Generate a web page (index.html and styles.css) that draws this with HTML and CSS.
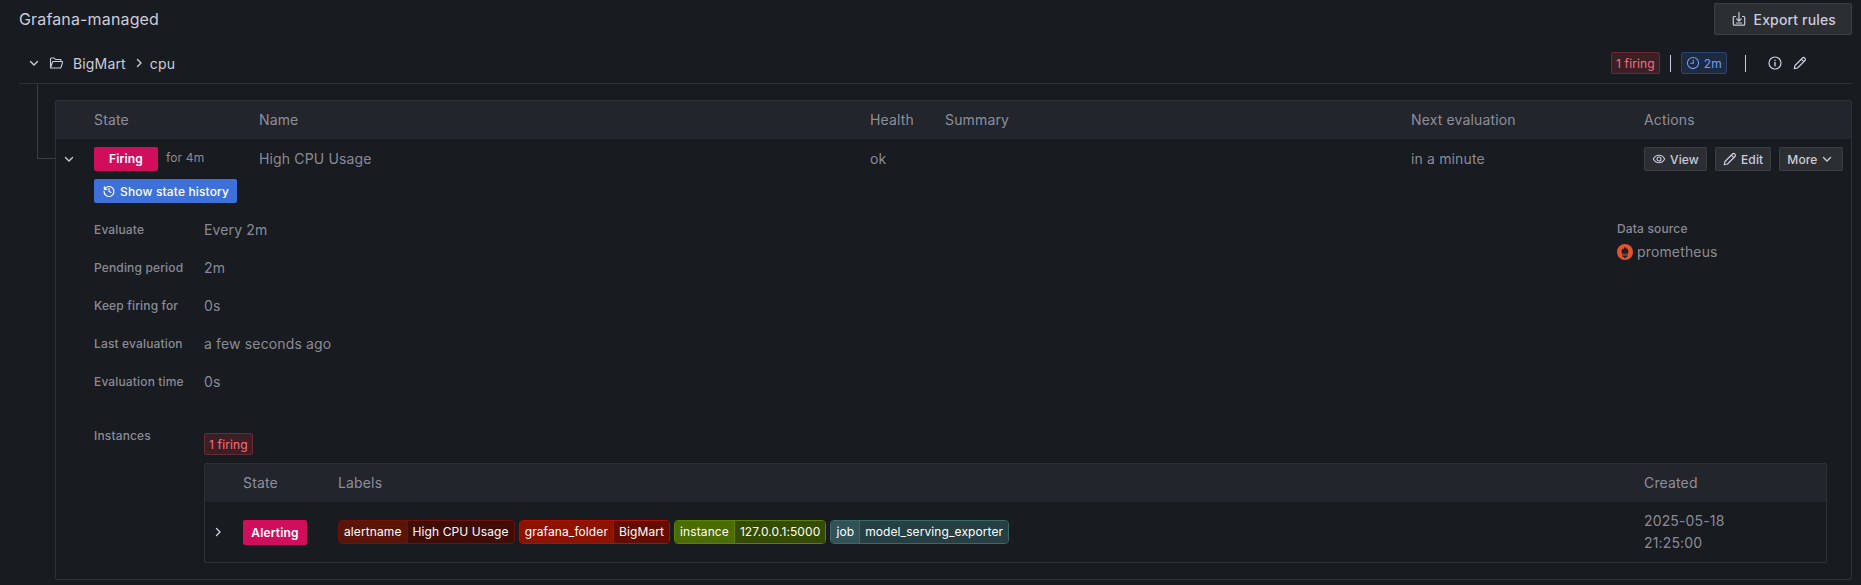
FILE: index.html
```html
<!DOCTYPE html>
<html lang="en">
<head>
    <meta charset="UTF-8">
    <meta name="viewport" content="width=device-width, initial-scale=1.0">
    <title>Alert rules</title>
    <link rel="stylesheet" href="styles.css">
</head>
<body>
    <svg class="defs" width="0" height="0">
        <symbol id="i-down" viewBox="0 0 16 16"><path d="M4.5 6.5 8 10l3.5-3.5" fill="none" stroke="currentColor" stroke-width="1.4" stroke-linecap="round" stroke-linejoin="round"/></symbol>
        <symbol id="i-right" viewBox="0 0 16 16"><path d="M6.5 4.5 10 8l-3.5 3.5" fill="none" stroke="currentColor" stroke-width="1.4" stroke-linecap="round" stroke-linejoin="round"/></symbol>
        <symbol id="i-folder" viewBox="0 0 16 16"><path d="M2.5 13V3.8c0-.4.3-.8.8-.8h2.900l1.300 1.500h4.700c.4 0 .8.400.8.8V6.500M2.500 13h9.700c.3 0 .6-.2.700-.5l1.700-5.100c.2-.5-.2-.9-.6-.9H5.200c-.3 0-.6.200-.7.500L2.500 13Z" fill="none" stroke="currentColor" stroke-width="1.1" stroke-linejoin="round"/></symbol>
        <symbol id="i-import" viewBox="0 0 16 16"><path d="M4.5 5.500H3.300c-.6 0-1 .4-1 1v6.700c0 .6.400 1 1 1h9.400c.6 0 1-.4 1-1V6.500c0-.6-.4-1-1-1h-1.200M8 1.500V10M5.700 7.800 8 10.100l2.300-2.300M5.500 12h5" fill="none" stroke="currentColor" stroke-width="1.2" stroke-linecap="round" stroke-linejoin="round"/></symbol>
        <symbol id="i-clock" viewBox="0 0 16 16"><circle cx="8" cy="8" r="6.4" fill="none" stroke="currentColor" stroke-width="1.2"/><path d="M8.300 4.500v3.800H5.400" fill="none" stroke="currentColor" stroke-width="1.2" stroke-linecap="round" stroke-linejoin="round"/></symbol>
        <symbol id="i-info" viewBox="0 0 16 16"><circle cx="8" cy="8" r="6" fill="none" stroke="currentColor" stroke-width="1.2"/><path d="M8 7.500v3.200M8 5.200v.2" fill="none" stroke="currentColor" stroke-width="1.4" stroke-linecap="round"/></symbol>
        <symbol id="i-pen" viewBox="0 0 16 16"><path d="M2.300 13.700 3 10.500l7.500-7.500c.6-.6 1.500-.6 2.100 0l.4.400c.6.600.6 1.500 0 2.100l-7.500 7.500-3.200.7ZM9.300 4.200l2.500 2.500" fill="none" stroke="currentColor" stroke-width="1.2" stroke-linejoin="round"/></symbol>
        <symbol id="i-eye" viewBox="0 0 16 16"><path d="M1.500 8C3 5.200 5.300 3.800 8 3.800s5 1.400 6.500 4.200C13 10.800 10.700 12.200 8 12.200S3 10.800 1.500 8Z" fill="none" stroke="currentColor" stroke-width="1.2" stroke-linejoin="round"/><circle cx="8" cy="8" r="2.3" fill="none" stroke="currentColor" stroke-width="1.2"/></symbol>
        <symbol id="i-history" viewBox="0 0 16 16"><path d="M2.700 3.200v2.900h2.900M2.900 6A5.700 5.700 0 1 1 2.300 8.300M8 5v3.300l2.200 1.300" fill="none" stroke="currentColor" stroke-width="1.3" stroke-linecap="round" stroke-linejoin="round"/></symbol>
    </svg>

    <div class="page-head">
        <h1>Grafana-managed</h1>
        <button class="btn btn-large"><svg class="icon"><use href="#i-import"/></svg>Export rules</button>
    </div>

    <div class="group-head">
        <svg class="icon group-toggle"><use href="#i-down"/></svg>
        <svg class="icon group-folder"><use href="#i-folder"/></svg>
        <span class="crumb">BigMart</span>
        <svg class="icon crumb-sep"><use href="#i-right"/></svg>
        <span class="crumb">cpu</span>
        <div class="group-meta">
            <span class="badge badge-red">1 firing</span>
            <span class="pipe"></span>
            <span class="badge badge-blue"><svg class="icon icon-small"><use href="#i-clock"/></svg>2m</span>
            <span class="pipe pipe-wide"></span>
            <svg class="icon meta-icon"><use href="#i-info"/></svg>
            <svg class="icon meta-icon"><use href="#i-pen"/></svg>
        </div>
    </div>

    <div class="group-body">
        <div class="tree-line"></div>
        <div class="rules">
            <div class="rule-cols rule-head">
                <span></span>
                <span>State</span>
                <span>Name</span>
                <span>Health</span>
                <span>Summary</span>
                <span>Next evaluation</span>
                <span>Actions</span>
            </div>
            <div class="rule-cols rule-row">
                <svg class="icon row-toggle"><use href="#i-down"/></svg>
                <div class="state-cell">
                    <div class="state-line">
                        <span class="pill">Firing</span>
                        <span class="for-time">for 4m</span>
                    </div>
                    <button class="btn-history"><svg class="icon icon-small"><use href="#i-history"/></svg>Show state history</button>
                </div>
                <span>High CPU Usage</span>
                <span>ok</span>
                <span></span>
                <span>in a minute</span>
                <div class="actions">
                    <button class="btn"><svg class="icon icon-small"><use href="#i-eye"/></svg>View</button>
                    <button class="btn"><svg class="icon icon-small icon-pen"><use href="#i-pen"/></svg>Edit</button>
                    <button class="btn">More<svg class="icon icon-after"><use href="#i-down"/></svg></button>
                </div>
            </div>

            <div class="details">
                <dl class="facts">
                    <div class="fact"><dt>Evaluate</dt><dd>Every 2m</dd></div>
                    <div class="fact"><dt>Pending period</dt><dd>2m</dd></div>
                    <div class="fact"><dt>Keep firing for</dt><dd>0s</dd></div>
                    <div class="fact"><dt>Last evaluation</dt><dd>a few seconds ago</dd></div>
                    <div class="fact"><dt>Evaluation time</dt><dd>0s</dd></div>
                </dl>
                <div class="source">
                    <div class="source-title">Data source</div>
                    <div class="source-name">
                        <svg class="prom" viewBox="0 0 16 16">
                            <circle cx="8" cy="8" r="8" fill="#e6522c"/>
                            <path d="M8 2.200c.3 1.400 1.100 1.800 1.500 2.700.2-.4.300-.6.300-1 1 1.100 1.700 2.600 1.500 4.300l-.5 1.600H5.200l-.6-1.600c-.2-1.500.4-2.700 1.200-3.600 0 .4.100.7.300 1C6.500 5 7.700 3.700 8 2.200Z" fill="#1f1f22"/>
                            <path d="M5.200 10.400h5.600v1.100H5.200zM5.600 12h4.800v.9H5.600zM6.900 13.300h2.200c0 .7-.5 1.100-1.100 1.100s-1.100-.4-1.100-1.100Z" fill="#1f1f22"/>
                        </svg>
                        prometheus
                    </div>
                </div>
            </div>

            <div class="instances">
                <div class="instances-title">Instances</div>
                <div class="instances-main">
                    <span class="badge badge-red">1 firing</span>
                    <div class="inst-table">
                        <div class="inst-cols inst-head">
                            <span></span>
                            <span>State</span>
                            <span>Labels</span>
                            <span>Created</span>
                        </div>
                        <div class="inst-cols inst-row">
                            <svg class="icon row-toggle"><use href="#i-right"/></svg>
                            <span class="pill">Alerting</span>
                            <div class="labels">
                                <span class="label label-1"><b>alertname</b><i>High CPU Usage</i></span>
                                <span class="label label-2"><b>grafana_folder</b><i>BigMart</i></span>
                                <span class="label label-3"><b>instance</b><i>127.0.0.1:5000</i></span>
                                <span class="label label-4"><b>job</b><i>model_serving_exporter</i></span>
                            </div>
                            <div class="created">2025-05-18<br>21:25:00</div>
                        </div>
                    </div>
                </div>
            </div>
        </div>
    </div>
</body>
</html>
```

FILE: styles.css
```css
* {
    margin: 0;
    padding: 0;
    box-sizing: border-box;
}

body {
    background-color: #181b1f;
    color: #ccccdc;
    font-family: Inter, "Noto Sans", sans-serif;
    font-size: 14px;
    letter-spacing: 0.15px;
    overflow: hidden;
}

.defs {
    display: block;
    height: 0;
}

.icon {
    width: 16px;
    height: 16px;
    flex: none;
}

.icon-small {
    width: 14px;
    height: 14px;
}

.icon-pen {
    transform: scale(1.15);
}

.page-head {
    display: flex;
    justify-content: space-between;
    align-items: center;
    height: 35px;
    padding: 3px 9px 0 19px;
}

h1 {
    font-size: 16px;
    font-weight: 400;
    line-height: 32px;
}

.btn {
    display: inline-flex;
    align-items: center;
    gap: 4px;
    height: 24px;
    padding: 0 7px;
    border: 1px solid rgba(204, 204, 220, 0.1);
    border-radius: 2px;
    background-color: #2b2e33;
    color: #ccccdc;
    font-family: inherit;
    font-size: 12px;
    font-weight: 500;
    letter-spacing: 0.15px;
}

.btn-large {
    gap: 7px;
    height: 32px;
    padding: 0 15px 0 16px;
    font-size: 14px;
}

.icon-after {
    margin-left: -3px;
}

.group-head {
    display: flex;
    align-items: center;
    height: 49px;
    margin: 0 9px 0 19px;
    padding: 8px 0 0;
    border-bottom: 1px solid rgba(204, 204, 220, 0.12);
}

.group-toggle {
    margin-left: 7px;
    margin-right: 6px;
}

.group-folder {
    margin-right: 9px;
}

.crumb-sep {
    margin: 0 3px 0 5px;
}

.group-meta {
    display: flex;
    align-items: center;
    margin-left: auto;
    padding-right: 35px;
}

.badge {
    display: inline-flex;
    align-items: center;
    height: 22px;
    padding: 0 4px;
    border: 1px solid;
    border-radius: 2px;
    font-size: 12px;
}

.badge-red {
    background-color: #3a2025;
    border-color: #6a2a33;
    color: #ff6b7e;
}

.badge-blue {
    gap: 4px;
    background-color: #1d2a40;
    border-color: #2a4470;
    color: #6e9fff;
}

.pipe {
    width: 1px;
    height: 17px;
    margin: 0 10px;
    background-color: #ccccdc;
}

.pipe-wide {
    margin: 0 21px 0 18px;
}

.meta-icon {
    margin-right: 9px;
}

.group-body {
    display: flex;
    align-items: flex-start;
    padding-right: 9px;
}

.tree-line {
    flex: none;
    width: 18px;
    height: 75px;
    margin-left: 37px;
    border-left: 1px solid rgba(204, 204, 220, 0.2);
    border-bottom: 1px solid rgba(204, 204, 220, 0.2);
}

.rules {
    flex: 1;
    min-width: 0;
    height: 480px;
    margin-top: 16px;
    border: 1px solid rgba(204, 204, 220, 0.12);
    border-radius: 2px;
}

.rule-cols {
    display: grid;
    grid-template-columns: 38px 165px 611px 75px 466px 233px 1fr;
}

.rule-head,
.inst-head {
    align-items: center;
    height: 38px;
    padding-bottom: 2px;
    background-color: #22252b;
    color: rgba(204, 204, 220, 0.65);
}

.rule-row {
    padding-top: 8px;
    color: rgba(204, 204, 220, 0.65);
    line-height: 24px;
}

.row-toggle {
    margin: 4px 0 0 5px;
    color: #ccccdc;
}

.state-line {
    display: flex;
    align-items: center;
    gap: 8px;
    margin-bottom: 8px;
}

.pill {
    display: flex;
    justify-content: center;
    align-items: center;
    width: 64px;
    height: 24px;
    border-radius: 2px;
    background-color: #d10e5c;
    color: #fff;
    font-size: 12px;
    font-weight: 600;
}

.for-time {
    font-size: 12px;
    margin-top: -2px;
}

.btn-history {
    display: flex;
    align-items: center;
    gap: 4px;
    height: 24px;
    padding: 0 8px;
    border: none;
    border-radius: 2px;
    background-color: #3d71d9;
    color: #fff;
    font-family: inherit;
    font-size: 12px;
    font-weight: 500;
    letter-spacing: 0.15px;
}

.actions {
    display: flex;
    gap: 8px;
}

.details {
    display: grid;
    grid-template-columns: 1fr 234px;
    padding: 15px 0 0 38px;
}

.facts {
    display: flex;
    flex-direction: column;
    gap: 16px;
}

.fact {
    display: flex;
    align-items: center;
    height: 22px;
}

dt {
    width: 110px;
    color: rgba(204, 204, 220, 0.65);
    font-size: 12px;
    font-weight: 500;
}

dd {
    color: rgba(204, 204, 220, 0.65);
}

.source-title {
    color: rgba(204, 204, 220, 0.65);
    font-size: 12px;
    font-weight: 500;
    line-height: 22px;
}

.source-name {
    display: flex;
    align-items: center;
    gap: 4px;
    margin-top: 3px;
    color: rgba(204, 204, 220, 0.65);
}

.prom {
    width: 16px;
    height: 16px;
}

.instances {
    display: flex;
    padding: 35px 24px 0 38px;
}

.instances-title {
    flex: none;
    width: 110px;
    color: rgba(204, 204, 220, 0.65);
    font-size: 12px;
    font-weight: 500;
    line-height: 18px;
}

.instances-main {
    display: flex;
    flex: 1;
    flex-direction: column;
    align-items: flex-start;
    min-width: 0;
    padding-top: 6px;
}

.inst-table {
    align-self: stretch;
    margin-top: 8px;
    border: 1px solid rgba(204, 204, 220, 0.12);
    border-radius: 2px;
}

.inst-cols {
    display: grid;
    grid-template-columns: 38px 95px 1fr 182px;
}

.inst-row {
    align-items: center;
    height: 60px;
}

.inst-row .row-toggle {
    margin: 0 0 0 5px;
}

.inst-row .pill {
    height: 25px;
    margin-top: 1px;
}

.labels {
    display: flex;
    gap: 4px;
}

.label {
    display: inline-flex;
    height: 24px;
    border: 1px solid;
    border-radius: 4px;
    overflow: hidden;
    color: #fff;
    font-size: 12px;
    letter-spacing: 0.1px;
    line-height: 22px;
}

.label b,
.label i {
    padding: 0 5px;
    font-style: normal;
    font-weight: 400;
}

.label i {
    border-left: 1px solid;
    border-color: inherit;
}

.label-1 {
    border-color: #6b1209;
}

.label-1 b {
    background-color: #5a1408;
}

.label-1 i {
    background-color: #3f0d05;
}

.label-2 {
    border-color: #a81400;
}

.label-2 b {
    background-color: #8f1200;
}

.label-2 i {
    background-color: #650c00;
}

.label-3 {
    border-color: #5a8200;
}

.label-3 b {
    background-color: #4a6c00;
}

.label-3 i {
    background-color: #344b00;
}

.label-4 {
    border-color: #3f6666;
}

.label-4 b {
    background-color: #315357;
}

.label-4 i {
    background-color: #253f42;
}

.created {
    color: rgba(204, 204, 220, 0.65);
    line-height: 22px;
}
```
